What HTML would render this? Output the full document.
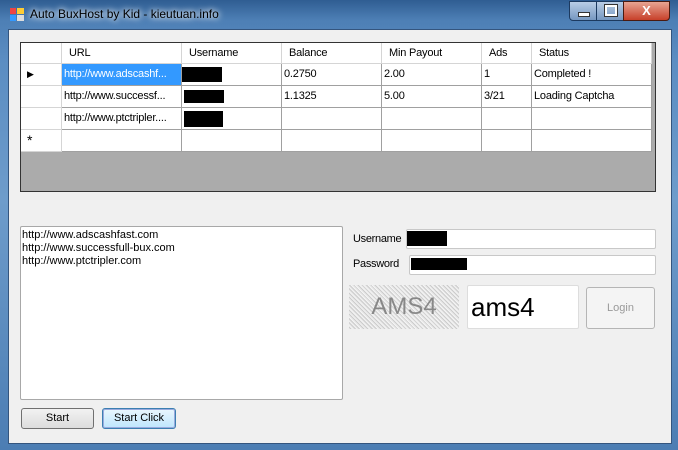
<!DOCTYPE html>
<html><head><style>
body{margin:0;width:678px;height:450px;overflow:hidden;background:#5a86b8;font-family:"Liberation Sans",sans-serif;font-size:11px;position:relative}
.a{position:absolute}
.frame{left:0;top:0;width:678px;height:450px;background:linear-gradient(180deg,#2f5d92 0,#4d7fb5 20px,#5b8dc2 60px,#6e9ccb 200px,#4c7db3 450px)}
.client{left:8px;top:29px;width:662px;height:413px;background:#f0f0f0;border:1px solid #34557e}
.cell{position:absolute;box-sizing:border-box;border-right:1px solid #a0a0a0;border-bottom:1px solid #a0a0a0;background:#fff;padding:4px 0 0 2px;white-space:nowrap;overflow:hidden;letter-spacing:-0.2px}
.hd{background:#fff;border-color:#d5d5d5;padding-left:7px}
.blk{position:absolute;background:#000}
.tb{position:absolute;background:#fff;border:1px solid #c8c8c8;border-radius:2px;box-sizing:border-box}
.btn{position:absolute;box-sizing:border-box;border:1px solid #707070;border-radius:3px;background:linear-gradient(#f2f2f2,#dcdcdc);text-align:center;line-height:19px}
</style></head><body>
<div class="a frame"></div>
<div class="a" style="left:10px;top:8px;width:14px;height:13px">
<div class="a" style="left:0;top:0;width:6px;height:6px;background:#e44"></div>
<div class="a" style="left:7px;top:0;width:7px;height:6px;background:#fc3"></div>
<div class="a" style="left:0;top:7px;width:6px;height:6px;background:#39f"></div>
<div class="a" style="left:7px;top:7px;width:7px;height:6px;background:#ddd"></div></div>
<div class="a" style="left:30px;top:7px;color:#000;font-size:12px;text-shadow:0 0 6px #fff,0 0 8px #fff">Auto BuxHost by Kid - kieutuan.info</div>
<div class="a" style="left:569px;top:1px;width:26px;height:18px;border:1px solid #1c3a60;border-radius:0 0 0 4px;background:linear-gradient(#b9cde6,#7697c0)"><div class="a" style="left:8px;top:10px;width:10px;height:3px;background:#fff;border:1px solid #333"></div></div>
<div class="a" style="left:596px;top:1px;width:26px;height:18px;border:1px solid #1c3a60;background:linear-gradient(#b9cde6,#7697c0)"><div class="a" style="left:8px;top:3px;width:8px;height:7px;border:2px solid #fff;outline:1px solid #333"></div></div>
<div class="a" style="left:623px;top:1px;width:45px;height:18px;border:1px solid #4a1a10;border-radius:0 0 4px 0;background:linear-gradient(#e8a593,#c7402a);color:#fff;font-weight:bold;text-align:center;font-size:13px;line-height:17px">X</div>
<div class="a client"></div>
<div class="a" style="left:20px;top:42px;width:636px;height:150px;background:#ababab;border:1px solid #333;box-sizing:border-box"></div>
<div class="cell hd" style="left:21px;top:43px;width:41px;height:21px"></div>
<div class="cell hd" style="left:62px;top:43px;width:120px;height:21px">URL</div>
<div class="cell hd" style="left:182px;top:43px;width:100px;height:21px">Username</div>
<div class="cell hd" style="left:282px;top:43px;width:100px;height:21px">Balance</div>
<div class="cell hd" style="left:382px;top:43px;width:100px;height:21px">Min Payout</div>
<div class="cell hd" style="left:482px;top:43px;width:50px;height:21px">Ads</div>
<div class="cell hd" style="left:532px;top:43px;width:120px;height:21px">Status</div>
<div class="cell hd" style="left:21px;top:64px;width:41px;height:22px;font-size:9px;padding-left:6px;padding-top:5px">&#9654;</div>
<div class="cell" style="left:62px;top:64px;width:120px;height:22px;background:#3399ff;color:#fff">http://www.adscashf...</div>
<div class="cell" style="left:182px;top:64px;width:100px;height:22px"></div><div class="blk" style="left:182px;top:67px;width:40px;height:15px"></div>
<div class="cell" style="left:282px;top:64px;width:100px;height:22px">0.2750</div>
<div class="cell" style="left:382px;top:64px;width:100px;height:22px">2.00</div>
<div class="cell" style="left:482px;top:64px;width:50px;height:22px">1</div>
<div class="cell" style="left:532px;top:64px;width:120px;height:22px">Completed !</div>
<div class="cell hd" style="left:21px;top:86px;width:41px;height:22px"></div>
<div class="cell" style="left:62px;top:86px;width:120px;height:22px">http://www.successf...</div>
<div class="cell" style="left:182px;top:86px;width:100px;height:22px"></div><div class="blk" style="left:184px;top:90px;width:40px;height:13px"></div>
<div class="cell" style="left:282px;top:86px;width:100px;height:22px">1.1325</div>
<div class="cell" style="left:382px;top:86px;width:100px;height:22px">5.00</div>
<div class="cell" style="left:482px;top:86px;width:50px;height:22px">3/21</div>
<div class="cell" style="left:532px;top:86px;width:120px;height:22px">Loading Captcha</div>
<div class="cell hd" style="left:21px;top:108px;width:41px;height:22px"></div>
<div class="cell" style="left:62px;top:108px;width:120px;height:22px">http://www.ptctripler....</div>
<div class="cell" style="left:182px;top:108px;width:100px;height:22px"></div><div class="blk" style="left:184px;top:111px;width:39px;height:16px"></div>
<div class="cell" style="left:282px;top:108px;width:100px;height:22px"></div>
<div class="cell" style="left:382px;top:108px;width:100px;height:22px"></div>
<div class="cell" style="left:482px;top:108px;width:50px;height:22px"></div>
<div class="cell" style="left:532px;top:108px;width:120px;height:22px"></div>
<div class="cell hd" style="left:21px;top:130px;width:41px;height:22px;font-size:14px;padding:2px 0 0 6px">*</div>
<div class="cell" style="left:62px;top:130px;width:120px;height:22px"></div>
<div class="cell" style="left:182px;top:130px;width:100px;height:22px"></div>
<div class="cell" style="left:282px;top:130px;width:100px;height:22px"></div>
<div class="cell" style="left:382px;top:130px;width:100px;height:22px"></div>
<div class="cell" style="left:482px;top:130px;width:50px;height:22px"></div>
<div class="cell" style="left:532px;top:130px;width:120px;height:22px"></div>
<div class="tb" style="left:20px;top:226px;width:323px;height:174px;border-color:#a8a8a8;padding:2px 0 0 1px;line-height:13px;font-size:11px">http://www.adscashfast.com<br>http://www.successfull-bux.com<br>http://www.ptctripler.com</div>
<div class="btn" style="left:21px;top:408px;width:73px;height:21px">Start</div>
<div class="btn" style="left:102px;top:408px;width:74px;height:21px;border-color:#3c7fb1;box-shadow:inset 0 0 0 1px #9ad;background:linear-gradient(#eaf6fd,#bee6fd)">Start Click</div>
<div class="a" style="left:353px;top:233px;letter-spacing:-0.3px">Username</div>
<div class="tb" style="left:406px;top:229px;width:250px;height:20px"></div><div class="blk" style="left:407px;top:231px;width:40px;height:15px"></div>
<div class="a" style="left:353px;top:258px;letter-spacing:-0.3px">Password</div>
<div class="tb" style="left:409px;top:255px;width:247px;height:20px"></div><div class="blk" style="left:411px;top:258px;width:56px;height:12px"></div>
<div class="a" style="left:349px;top:285px;width:110px;height:44px;background:repeating-linear-gradient(45deg,#e8e8e8 0 1px,#ccc 1px 2px,#f4f4f4 2px 3px);color:#888;font-size:24px;line-height:44px;text-align:center">AMS4</div>
<div class="tb" style="left:467px;top:285px;width:112px;height:44px;font-size:26px;line-height:42px;padding-left:3px;border-color:#ddd">ams4</div>
<div class="btn" style="left:586px;top:287px;width:69px;height:42px;line-height:40px;color:#9a9a9a;border-color:#b5b5b5;background:#f4f4f4">Login</div>
</body></html>
